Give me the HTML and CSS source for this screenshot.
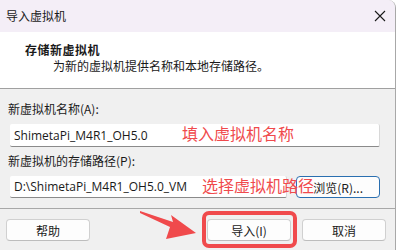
FILE: index.html
```html
<html>
  <head>
    <link rel="stylesheet" href="styles.css">
    <title>导入虚拟机</title>
  </head>
  <body>
    <div class="window">
      <div class="titlebar">
        <span class="title">导入虚拟机</span>
        <svg class="close" width="12" height="12" viewBox="0 0 12 12">
          <path d="M1 1 L11 11 M11 1 L1 11" stroke="#1a1a1a" stroke-width="1.1" fill="none"/>
        </svg>
      </div>
      <div class="header">
        <div class="header-title">存储新虚拟机</div>
        <div class="header-sub">为新的虚拟机提供名称和本地存储路径。</div>
      </div>
      <div class="content">
        <div class="label">新虚拟机名称(A):</div>
        <div class="field field-name">ShimetaPi_M4R1_OH5.0</div>
        <div class="label label-path">新虚拟机的存储路径(P):</div>
        <div class="path-row">
          <div class="field field-path">D:\ShimetaPi_M4R1_OH5.0_VM</div>
          <div class="browse">浏览(R)...</div>
        </div>
      </div>
      <div class="footer">
        <div class="btn">帮助</div>
        <div class="footer-right">
          <div class="btn">导入(I)</div>
          <div class="btn">取消</div>
        </div>
      </div>

      <!-- annotations drawn over the dialog -->
      <div class="note note-name">填入虚拟机名称</div>
      <div class="note note-path">选择虚拟机路径</div>
      <div class="highlight"></div>
      <svg class="arrow" width="397" height="250" viewBox="0 0 397 250">
        <polygon points="140,211 173,222 171,215 196,233 166,239 170,227 140,213" fill="#f04a4c"/>
      </svg>
    </div>
  </body>
</html>
```

FILE: styles.css
```css
html, body {
  margin: 0;
  width: 397px;
  height: 250px;
  overflow: hidden;
  background: #ffffff;
  font-family: "Noto Sans CJK SC", "Noto Sans", sans-serif;
  font-size: 12px;
  color: #1a1a1a;
}
.window {
  position: relative;
  width: 395px;
  height: 250px;
  border-right: 1px solid #a8a8a8;
  border-top-right-radius: 8px;
  background: #f0f0f0;
  overflow: hidden;
}
.titlebar {
  height: 32px;
  background: #f4eef7;
  display: flex;
  align-items: center;
  justify-content: space-between;
  padding: 0 9px 0 6px;
}
.title {
  font-size: 12px;
  line-height: 16px;
}
.close { display: block; }
.header {
  height: 56px;
  background: #ffffff;
  border-bottom: 1px solid #a0a0a0;
  box-sizing: border-box;
  height: 57px;
  padding-top: 10px;
}
.header-title {
  font-weight: bold;
  padding-left: 25px;
  line-height: 16px;
  letter-spacing: 0.5px;
}
.header-sub {
  padding-left: 53px;
  line-height: 16px;
  margin-top: 0px;
}
.content {
  padding: 12px 15px 0 10px;
  height: 120px;
  box-sizing: border-box;
  border-bottom: 1px solid #a8a8a8;
}
.label {
  line-height: 16px;
  margin-left: -2px;
}
.label-path { margin-top: 6px; }
.field {
  background: #ffffff;
  border-bottom: 1px solid #8a8a8a;
  border-right: 1px solid #d8d8d8;
  border-radius: 2px;
  box-sizing: border-box;
  padding-left: 4px;
  font-family: "Open Sans", "Noto Sans CJK SC", sans-serif;
  font-size: 12px;
  display: flex;
  align-items: center;
}
.field-name {
  margin-top: 7px;
  height: 23px;
}
.path-row {
  margin-top: 7px;
  display: flex;
  gap: 9px;
}
.field-path {
  width: 278px;
  height: 22px;
}
.browse {
  width: 84px;
  height: 22px;
  box-sizing: border-box;
  border: 1px solid #2a6fb0;
  border-radius: 4px;
  background: #fdfdfd;
  display: flex;
  align-items: center;
  justify-content: center;
}
.footer {
  display: flex;
  justify-content: space-between;
  padding: 10px 9px 0 6px;
}
.footer-right {
  display: flex;
  gap: 11px;
}
.btn {
  width: 84px;
  height: 22px;
  box-sizing: border-box;
  border: 1px solid #d0d0d0;
  border-bottom-color: #bdbdbd;
  border-radius: 4px;
  background: #fdfdfd;
  display: flex;
  align-items: center;
  justify-content: center;
}
.note {
  position: absolute;
  color: #f04a4c;
  font-size: 16px;
  line-height: 20px;
}
.note-name { left: 182px; top: 123px; }
.note-path { left: 202px; top: 175px; }
.highlight {
  position: absolute;
  left: 202px;
  top: 211px;
  width: 95px;
  height: 37px;
  box-sizing: border-box;
  border: 4px solid #f04a4c;
  border-radius: 7px;
}
.arrow {
  position: absolute;
  left: 0;
  top: 0;
}
```
